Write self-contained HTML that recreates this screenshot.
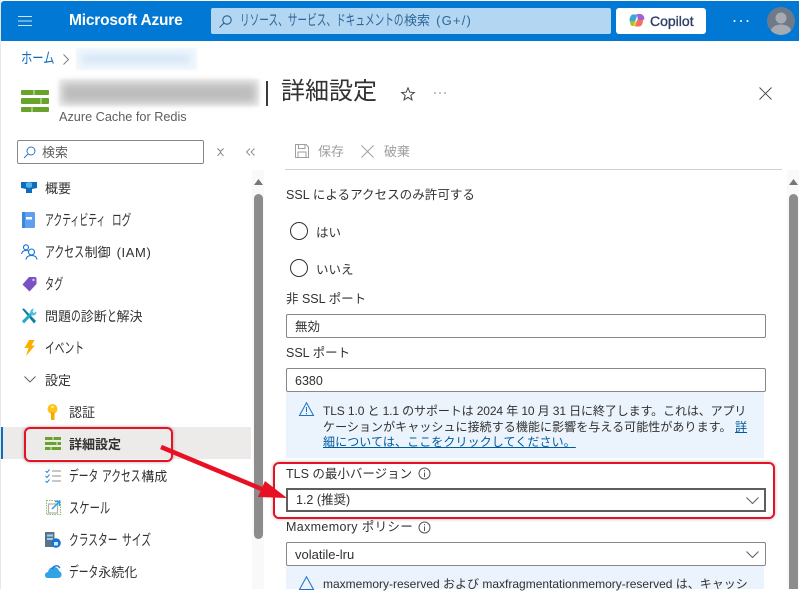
<!DOCTYPE html>
<html lang="ja"><head><meta charset="utf-8"><style>
html,body{margin:0;padding:0}
body{width:799px;height:589px;overflow:hidden;background:#fff;position:relative;font-family:"Liberation Sans","Noto Sans CJK JP",sans-serif;font-size:12.5px;color:#323130}
.t{position:absolute;white-space:nowrap;line-height:16px}
.s{font-size:13px}
.k{display:inline-block;font-style:normal;font-size:15px;white-space:nowrap;width:calc(var(--n)*var(--w,9.75)*1px);transform:scaleX(calc(var(--w,9.75)/15));transform-origin:0 50%}
.b{position:absolute;box-sizing:border-box}
svg{position:absolute;overflow:visible}
.inp{position:absolute;left:286px;width:480px;height:24px;box-sizing:border-box;border:1px solid #8a8886;border-radius:2px;background:#fff}
</style></head><body>
<div class="b" style="left:0;top:0;width:1px;height:589px;background:#e6e6e6"></div>
<div class="b" style="left:1px;top:1px;width:798px;height:40px;background:#0078d4;border-top-left-radius:3px"></div>
<svg style="left:18px;top:15px" width="15" height="12"><path d="M0 1.500H14M0 6H14M0 10.500H14" stroke="#cfe4f6" stroke-width="1.100"/></svg>
<div class="t" style="left:69px;top:13px;color:#fff;font-size:15.500px;font-weight:bold;letter-spacing:-.2px">Microsoft Azure</div>
<div class="b" style="left:211px;top:8px;width:400px;height:26px;background:#b3d6f2;border-radius:2px"></div>
<svg style="left:219px;top:15px" width="14" height="14" fill="none" stroke="#2b5f8e" stroke-width="1.100"><circle cx="8" cy="5" r="4.200"/><path d="M5 8L.5 12.500"/></svg>
<div class="t" style="left:240px;top:13px;color:#2f6898;font-size:13px"><i class="k" style="--n:17;--w:9.65">リソース、サービス、ドキュメントの</i>検索<span style="margin-left:6px;letter-spacing:1.200px">(G+/)</span></div>
<div class="b" style="left:616px;top:8px;width:90px;height:26px;background:#fff;border-radius:3px"></div>
<svg style="left:629px;top:13px" width="16" height="15"><path d="M3 1.500H8.500L6 9H1Q-.500 5 3 1.500Z" fill="#3fa7d6"/><path d="M8 1H12Q15 2 15.500 6L13 8H9Z" fill="#a35fd8"/><path d="M1 8H6L5 13H3Q1 12 1 8Z" fill="#8fc63d"/><path d="M6 13L8 7H14Q14 12 11 13.500H6Z" fill="#f2705c"/><path d="M5 9H7.500L6.500 13H4Z" fill="#f5c13d"/></svg>
<div class="t" style="left:650px;top:13px;color:#2c3e66;font-size:14px;-webkit-text-stroke:.35px #2c3e66">Copilot</div>
<svg style="left:733px;top:20px" width="16" height="3" fill="#fff"><circle cx="1.500" cy="1" r="1"/><circle cx="8" cy="1" r="1"/><circle cx="14.500" cy="1" r="1"/></svg>
<svg style="left:767px;top:7px" width="28" height="28"><defs><clipPath id="c"><circle cx="14" cy="14" r="14"/></clipPath></defs><circle cx="14" cy="14" r="14" fill="#6e7a87"/><g clip-path="url(#c)" fill="#a5abb1"><circle cx="14" cy="11" r="5.500"/><ellipse cx="14" cy="24" rx="10" ry="6.500"/></g></svg>

<div class="t" style="left:21px;top:51px;color:#0f6cbd;font-size:13px"><i class="k" style="--n:3;--w:11.3">ホーム</i></div>
<svg style="left:63px;top:54px" width="6" height="11" fill="none" stroke="#777" stroke-width=".9"><path d="M.5 .5L5.500 5.500L.5 10.500"/></svg>
<div class="b" style="left:76px;top:48px;width:121px;height:22px;background:#eff6fc;filter:blur(1px)"></div>
<div class="b" style="left:82px;top:54px;width:108px;height:10px;background:#d9e9f7;filter:blur(3px)"></div>

<svg style="left:20px;top:90px" width="30" height="22"><rect x="1" width="28" height="5" rx="1" fill="#6aa32c"/><rect x="1" y="8" width="28" height="6" rx="1" fill="#6aa32c"/><rect x="1" y="17" width="28" height="5" rx="1" fill="#6aa32c"/><path d="M14 0V5M21 8V14M12 17V22" stroke="#d9ead0"/></svg>
<div class="b" style="left:59px;top:79px;width:200px;height:27px;background:#eeeeee;filter:blur(1px)"></div>
<div class="b" style="left:62px;top:83px;width:194px;height:20px;background:#bdbdbd;filter:blur(4px)"></div>
<div class="b" style="left:266px;top:81px;width:2px;height:25px;background:#3a3a3a"></div>
<div class="t" style="left:281px;top:76px;font-size:24px;line-height:32px;color:#323130">詳細設定</div>
<div class="t" style="left:59px;top:109px;color:#605e5c;font-size:12.700px">Azure Cache for Redis</div>
<svg style="left:401px;top:87px" width="14" height="14" fill="none" stroke="#444" stroke-width="1"><path d="M7 .8L8.800 5.200L13.300 5.500L9.800 8.400L11 12.900L7 10.400L3 12.900L4.200 8.400L.7 5.500L5.200 5.200Z"/></svg>
<svg style="left:434px;top:92px" width="12" height="2" fill="#777"><circle cx="1" cy="1" r=".8"/><circle cx="6" cy="1" r=".8"/><circle cx="11" cy="1" r=".8"/></svg>
<svg style="left:759px;top:87px" width="13" height="13" stroke="#444" stroke-width=".9"><path d="M.5 .5L12.500 12.500M12.500 .5L.5 12.500"/></svg>

<div class="b" style="left:17px;top:140px;width:187px;height:24px;border:1px solid #8a8886;border-radius:2px"></div>
<svg style="left:23px;top:146px" width="13" height="13" fill="none" stroke="#2b78c2" stroke-width="1"><circle cx="8" cy="5" r="4"/><path d="M5 8L1 12"/></svg>
<div class="t s" style="left:42px;top:145px;color:#605e5c">検索</div>
<svg style="left:217px;top:148px" width="7" height="8" fill="none" stroke="#777" stroke-width=".9"><path d="M.5 .5L3.500 3.500L6.500 .5M.5 8L3.500 4.500L6.500 8"/></svg>
<svg style="left:246px;top:148px" width="9" height="8" fill="none" stroke="#888" stroke-width=".9"><path d="M4 .5L.5 4L4 7.500M8.500 .5L5 4L8.500 7.500"/></svg>

<svg style="left:21px;top:182px" width="17" height="12"><path d="M0 0H16V6L11 7V11H5V7L0 6Z" fill="#0f6cbd"/><path d="M5 1L8 0L11 1V5L8 6L5 5Z" fill="#50b0e8"/></svg>
<div class="t s" style="left:45px;top:181px">概要</div>
<svg style="left:22px;top:212px" width="14" height="16"><rect width="13" height="16" rx="1.500" fill="#5ea0ef"/><rect x="0" width="3" height="16" fill="#3b87d9"/><rect x="4" y="5" width="6" height="2.500" fill="#fff"/></svg>
<div class="t s" style="left:45px;top:213px"><i class="k" style="--n:7;--w:8.84">アクティビティ</i><span style="margin-left:5px"></span><i class="k" style="--n:2;--w:9.6">ログ</i></div>
<svg style="left:21px;top:244px" width="17" height="16" fill="none" stroke="#1173d4" stroke-width="1.100"><circle cx="5" cy="3.300" r="2.500"/><path d="M.6 10Q1 6.500 5 6.500Q6.500 6.500 7.500 7.200"/><circle cx="10.500" cy="8" r="3"/><path d="M5 15.500Q5.500 11.500 10.500 11.500Q15.500 11.500 16 15.500"/></svg>
<div class="t s" style="left:45px;top:245px"><i class="k" style="--n:4;--w:9.9">アクセス</i>制御<span style="margin-left:6px;letter-spacing:.6px">(IAM)</span></div>
<svg style="left:22px;top:276px" width="15" height="16"><path d="M7 1H13Q14.500 1 14.500 3V8L7.500 15.500L.5 8.500Z" fill="#7b51c4"/><circle cx="11.500" cy="4" r="1.200" fill="#d9c9f3"/></svg>
<div class="t s" style="left:45px;top:277px"><i class="k" style="--n:2;--w:9.1">タグ</i></div>
<svg style="left:21px;top:308px" width="16" height="16"><path d="M1 1L3 .5L15 13L13 15.500Z" fill="#0c7d9c"/><path d="M1 13L9 5L11 7L3 15.500Z" fill="#27a7c9"/><path d="M9 5Q9 1 13 .5L11.500 3.500L13 5L15.500 3.500Q15.500 8 11 7.500Z" fill="#4dbfdd"/></svg>
<div class="t s" style="left:45px;top:309px">問題<i class="k" style="--n:1">の</i>診断<i class="k" style="--n:1">と</i>解決</div>
<svg style="left:24px;top:340px" width="11" height="16"><path d="M5 0H10.500L7.500 5.500H11L2 16L4.500 8H0.500Z" fill="#fbb000"/></svg>
<div class="t s" style="left:45px;top:341px"><i class="k" style="--n:4">イベント</i></div>
<svg style="left:24px;top:376px" width="12" height="7" fill="none" stroke="#555" stroke-width=".9"><path d="M.5 .5L6 6L11.500 .5"/></svg>
<div class="t s" style="left:45px;top:373px">設定</div>
<svg style="left:47px;top:404px" width="11" height="16"><circle cx="5.500" cy="5" r="5" fill="#fcc419"/><rect x="4" y="8" width="3.500" height="8" rx="1" fill="#f6a800"/><circle cx="5.500" cy="3" r="1.200" fill="#fff0b0"/></svg>
<div class="t s" style="left:69px;top:405px">認証</div>

<div class="b" style="left:1px;top:427px;width:250px;height:32px;background:#edebe9"></div>
<div class="b" style="left:1px;top:427px;width:2px;height:32px;background:#0f6cbd"></div>
<svg style="left:45px;top:437px" width="16" height="13"><rect width="16" height="3" fill="#6aa32c"/><rect y="5" width="16" height="3" fill="#6aa32c"/><rect y="10" width="16" height="3" fill="#6aa32c"/><path d="M8 0V3M12 5V8M6 10V13" stroke="#e3efd8"/></svg>
<div class="t s" style="left:69px;top:437px;font-weight:bold">詳細設定</div>
<div class="b" style="left:24px;top:427px;width:149px;height:35px;border:2px solid #e81123;border-radius:6px;box-shadow:0 0 3px rgba(0,0,0,.35)"></div>

<svg style="left:45px;top:469px" width="17" height="14" fill="none"><path d="M.5 2L2 3.500L4.500 .5M.5 7L2 8.500L4.500 5.500M.5 12L2 13.500L4.500 10.500" stroke="#2f87dc" stroke-width="1"/><path d="M7 2H16M7 7H16M7 12H16" stroke="#a6a6a6" stroke-width="1.300"/></svg>
<div class="t s" style="left:69px;top:469px"><i class="k" style="--n:3">データ</i><span style="margin-left:4px"></span><i class="k" style="--n:4">アクセス</i>構成</div>
<svg style="left:46px;top:500px" width="15" height="15" fill="none"><rect x=".5" y=".5" width="14" height="14" stroke="#8cc265" stroke-dasharray="1.500 1"/><rect x="2.500" y="4" width="9" height="9" stroke="#b0b0b0" stroke-width="1.200"/><path d="M6 9L13 2M9 1.500H13.500V6" stroke="#2f9ce8" stroke-width="1.500"/></svg>
<div class="t s" style="left:69px;top:501px"><i class="k" style="--n:4;--w:10.3">スケール</i></div>
<svg style="left:45px;top:532px" width="16" height="16"><rect width="10" height="15" fill="#5c7287"/><rect x="2" y="2.500" width="6" height="2" fill="#9fd0f2"/><rect x="2" y="6" width="6" height="2" fill="#9fd0f2"/><rect x="9" y="0" width="1" height="15" fill="#b9b9b9"/><circle cx="11" cy="11" r="4.800" fill="#1673cf"/><rect x="9" y="10" width="4" height="3.500" fill="#cfe6fb"/></svg>
<div class="t s" style="left:69px;top:533px"><i class="k" style="--n:5">クラスター</i><span style="margin-left:4px"></span><i class="k" style="--n:3">サイズ</i></div>
<svg style="left:45px;top:564px" width="17" height="14"><path d="M3 14Q0 14 0 11Q0 8.500 3 8Q4 3 9 3Q13 3 14 7Q16.500 8 16.500 10.500Q16.500 14 13 14Z" fill="#2fa3e6"/><path d="M7 5Q9 1 13 2L15 4" fill="none" stroke="#1673cf" stroke-width="1.300"/></svg>
<div class="t s" style="left:69px;top:565px"><i class="k" style="--n:3">データ</i>永続化</div>

<div class="b" style="left:252px;top:170px;width:12px;height:419px;background:#f9f9f9"></div>
<svg style="left:254px;top:179px" width="9" height="6"><path d="M4.500 0L9 6H0Z" fill="#777"/></svg>
<div class="b" style="left:254px;top:194px;width:9px;height:345px;background:#8c8c8c;border-radius:4.500px"></div>

<svg style="left:295px;top:144px" width="14" height="14" fill="none" stroke="#a19f9d" stroke-width="1"><path d="M.5 .5H11L13.500 3V13.500H.5ZM3.500 .5V4.500H10V.5M3 13.500V8H11V13.500"/></svg>
<div class="t" style="left:318px;top:144px;color:#a19f9d;font-size:13px">保存</div>
<svg style="left:361px;top:145px" width="13" height="13" stroke="#a19f9d" stroke-width="1"><path d="M.5 .5L12.500 12.500M12.500 .5L.5 12.500"/></svg>
<div class="t" style="left:384px;top:144px;color:#a19f9d;font-size:13px">破棄</div>
<div class="b" style="left:285px;top:169px;width:497px;height:1px;background:#d2d0ce"></div>

<div class="b" style="left:787px;top:170px;width:12px;height:419px;background:#f9f9f9"></div>
<svg style="left:789px;top:179px" width="9" height="6"><path d="M4.500 0L9 6H0Z" fill="#777"/></svg>
<div class="b" style="left:789px;top:194px;width:9px;height:395px;background:#8c8c8c;border-radius:4.500px 4.500px 0 0"></div>

<div class="t" style="left:286px;top:187px;letter-spacing:.05px">SSL によるアクセスのみ許可する</div>
<div class="b" style="left:290px;top:222px;width:18px;height:18px;border:1px solid #323130;border-radius:50%"></div>
<div class="t" style="left:316px;top:225px">はい</div>
<div class="b" style="left:290px;top:259px;width:18px;height:18px;border:1px solid #323130;border-radius:50%"></div>
<div class="t" style="left:316px;top:262px">いいえ</div>
<div class="t" style="left:286px;top:291px">非 SSL ポート</div>
<div class="inp" style="top:314px"></div>
<div class="t" style="left:295px;top:319px">無効</div>
<div class="t" style="left:286px;top:345px">SSL ポート</div>
<div class="inp" style="top:368px"></div>
<div class="t" style="left:295px;top:373px">6380</div>

<div class="b" style="left:286px;top:392px;width:478px;height:66px;background:#ebf3fc"></div>
<svg style="left:299px;top:402px" width="15" height="14" fill="none" stroke="#1f6fc4" stroke-width="1"><path d="M7.500 .8L14.500 13.500H.5Z"/><path d="M7.500 5V10M7.500 11V12.200"/></svg>
<div class="t" style="left:323px;top:403px;font-size:12px;letter-spacing:-.11px">TLS 1.0 と 1.1 のサポートは 2024 年 10 月 31 日に終了します。これは、アプリ</div>
<div class="t" style="left:323px;top:419px;font-size:12px;letter-spacing:.07px">ケーションがキャッシュに接続する機能に影響を与える可能性があります。 <span style="color:#005a9e;text-decoration:underline">詳</span></div>
<div class="t" style="left:323px;top:434px;font-size:12px;letter-spacing:.1px;color:#005a9e;text-decoration:underline">細については、ここをクリックしてください。</div>

<div class="t" style="left:286px;top:466px">TLS の最小バージョン</div>
<svg style="left:418px;top:467px" width="13" height="13" fill="none" stroke="#555"><circle cx="6.500" cy="6.500" r="5.500"/><path d="M6.500 5.500V10M6.500 3V4.200"/></svg>
<div class="b" style="left:286px;top:488px;width:480px;height:24px;border:2px solid #605e5c"></div>
<div class="t" style="left:296px;top:492px">1.2 (推奨)</div>
<svg style="left:746px;top:497px" width="13" height="7" fill="none" stroke="#605e5c" stroke-width="1"><path d="M.5 .5L6.500 6.500L12.500 .5"/></svg>
<div class="b" style="left:273px;top:462px;width:502px;height:57px;border:2px solid #e81123;border-radius:6px;box-shadow:0 0 3px rgba(0,0,0,.3)"></div>

<div class="t" style="left:286px;top:519px;letter-spacing:.35px">Maxmemory ポリシー</div>
<svg style="left:418px;top:521px" width="13" height="13" fill="none" stroke="#555"><circle cx="6.500" cy="6.500" r="5.500"/><path d="M6.500 5.500V10M6.500 3V4.200"/></svg>
<div class="inp" style="top:542px"></div>
<div class="t" style="left:295px;top:547px;font-size:13px">volatile-lru</div>
<svg style="left:746px;top:551px" width="13" height="7" fill="none" stroke="#605e5c" stroke-width="1"><path d="M.5 .5L6.500 6.500L12.500 .5"/></svg>
<div class="b" style="left:286px;top:566px;width:478px;height:23px;background:#ebf3fc"></div>
<svg style="left:299px;top:576px" width="15" height="14" fill="none" stroke="#1f6fc4" stroke-width="1"><path d="M7.500 .8L14.500 13.500H.5Z"/></svg>
<div class="t" style="left:323px;top:576px;font-size:12px">maxmemory-reserved および maxfragmentationmemory-reserved は、キャッシ</div>

<svg style="left:0;top:0;pointer-events:none" width="799" height="589"><path d="M161 447L264 490" stroke="#e81123" stroke-width="4.500"/><path d="M258 497L287 498L265 481Z" fill="#e81123"/></svg>
</body></html>
